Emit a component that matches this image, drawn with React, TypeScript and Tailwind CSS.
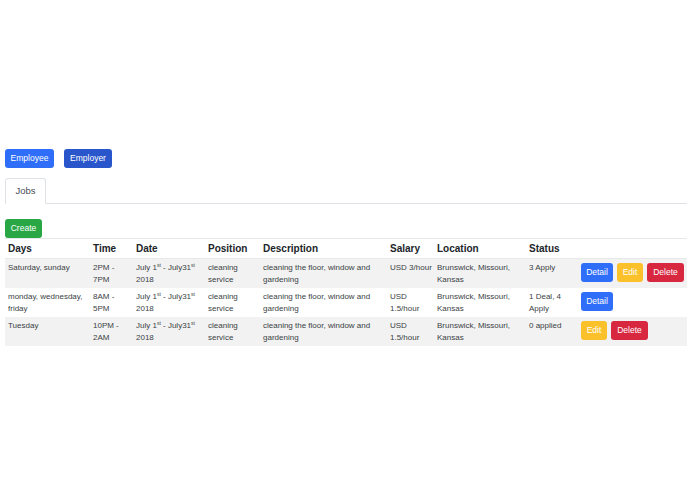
import React from "react";

const font = { fontFamily: '"Liberation Sans", Arial, sans-serif' };

function Sup({ children }: { children: React.ReactNode }) {
  return <sup className="text-[5px] relative -top-[3px] align-baseline">{children}</sup>;
}

function DateCell() {
  return (
    <>
      July 1<Sup>st</Sup> - July31<Sup>st</Sup> 2018
    </>
  );
}

const btn = "h-[19px] px-[5px] rounded-[3px] text-[8.5px] leading-[19px] text-white";

function Detail() {
  return <button className={`${btn} bg-[#2f6ef8] w-[32px]`}>Detail</button>;
}
function Edit() {
  return <button className={`${btn} bg-[#fbc12b] w-[26px]`}>Edit</button>;
}
function Delete() {
  return <button className={`${btn} bg-[#d7283f] w-[37px]`}>Delete</button>;
}

type Row = {
  days: string;
  time: string;
  salary: string;
  status: string;
  actions: React.ReactNode;
};

const rows: Row[] = [
  {
    days: "Saturday, sunday",
    time: "2PM - 7PM",
    salary: "USD 3/hour",
    status: "3 Apply",
    actions: (
      <div className="flex gap-[4px]">
        <Detail />
        <Edit />
        <Delete />
      </div>
    ),
  },
  {
    days: "monday, wednesday, friday",
    time: "8AM - 5PM",
    salary: "USD 1.5/hour",
    status: "1 Deal, 4 Apply",
    actions: (
      <div className="flex gap-[4px]">
        <Detail />
      </div>
    ),
  },
  {
    days: "Tuesday",
    time: "10PM - 2AM",
    salary: "USD 1.5/hour",
    status: "0 applied",
    actions: (
      <div className="flex gap-[4px]">
        <Edit />
        <Delete />
      </div>
    ),
  },
];

export default function App() {
  const td = "pl-[3px] pr-[1px] pt-[3px] pb-[2px] align-top text-[8px] leading-[12px] text-[#3a3f44]";
  const th = "px-[3px] pt-[2px] pb-[2px] text-left align-bottom text-[10px] leading-[15px] font-bold text-[#212529]";
  return (
    <div className="w-[695px] h-[494px] bg-white pt-[149px] pl-[5px] pr-[8px]" style={font}>
      <div className="flex gap-[10px]">
        <button className="h-[19px] w-[49px] rounded-[3px] bg-[#2f6ef8] text-white text-[8.5px] leading-[19px]">
          Employee
        </button>
        <button className="h-[19px] w-[48px] rounded-[3px] bg-[#2956cb] text-white text-[8.5px] leading-[19px]">
          Employer
        </button>
      </div>

      <div className="mt-[10px] flex border-b border-[#dee2e6]">
        <div className="h-[26px] w-[41px] -mb-px border border-[#dee2e6] border-b-white rounded-t-[3px] bg-white text-[9.5px] leading-[24px] text-[#495057] text-center">
          Jobs
        </div>
      </div>

      <button className="mt-[15px] h-[19px] w-[37px] rounded-[3px] bg-[#2aa745] text-white text-[8.5px] leading-[19px] block">
        Create
      </button>

      <table className="w-full table-fixed border-collapse">
        <colgroup>
          <col className="w-[85px]" />
          <col className="w-[43px]" />
          <col className="w-[72px]" />
          <col className="w-[55px]" />
          <col className="w-[127px]" />
          <col className="w-[47px]" />
          <col className="w-[92px]" />
          <col className="w-[52px]" />
          <col />
        </colgroup>
        <thead>
          <tr className="border-t border-b border-[#e6e8ea] h-[20px]">
            <th className={th}>Days</th>
            <th className={th}>Time</th>
            <th className={th}>Date</th>
            <th className={th}>Position</th>
            <th className={th}>Description</th>
            <th className={th}>Salary</th>
            <th className={th}>Location</th>
            <th className={th}>Status</th>
            <th className={th}></th>
          </tr>
        </thead>
        <tbody>
          {rows.map((r, i) => (
            <tr key={i} className={`h-[29px] ${i % 2 === 0 ? "bg-[#f2f2f2]" : "bg-white"}`}>
              <td className={td}>{r.days}</td>
              <td className={td}>{r.time}</td>
              <td className={td}>
                <DateCell />
              </td>
              <td className={td}>cleaning service</td>
              <td className={td}>cleaning the floor, window and gardening</td>
              <td className={td}>{r.salary}</td>
              <td className={td}>Brunswick, Missouri, Kansas</td>
              <td className={td}>{r.status}</td>
              <td className="px-[3px] pt-[4px] pb-[3px] align-top">{r.actions}</td>
            </tr>
          ))}
        </tbody>
      </table>
    </div>
  );
}
